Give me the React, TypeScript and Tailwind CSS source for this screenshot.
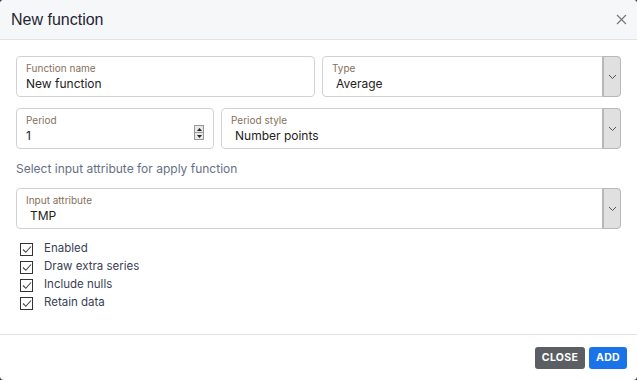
import React from 'react';

const FONT = { fontFamily: 'Inter, "Noto Sans", sans-serif' };

function Chevron() {
  return (
    <svg width="9" height="6" viewBox="0 0 9 6" fill="none" aria-hidden>
      <path d="M1 1l3.5 3.5L8 1" stroke="#555" strokeWidth="1" />
    </svg>
  );
}

function SelectBox({ label, value, className }: { label: string; value: string; className?: string }) {
  return (
    <div className={`flex h-[41px] min-w-0 rounded-[4px] border border-[#cfd3d8] bg-white ${className ?? ''}`}>
      <div className="flex min-w-0 flex-1 flex-col justify-center pl-[9px] pt-[1px]">
        <span className="text-[10px] leading-[13px] text-[#85705c]">{label}</span>
        <span className="pl-[4px] text-[12px] leading-[17px] text-[#222]">{value}</span>
      </div>
      <div className="flex w-[17px] shrink-0 items-center justify-center rounded-r-[3px] border-l border-[#b8b8b8] bg-[#e0e0e0] outline outline-1 outline-[#b8b8b8]">
        <Chevron />
      </div>
    </div>
  );
}

function Check({ label }: { label: string }) {
  return (
    <label className="flex h-[18px] items-center gap-[11px]">
      <span className="flex h-[13px] w-[13px] items-center justify-center border border-[#333] bg-white">
        <svg width="10" height="9" viewBox="0 0 10 9" fill="none" aria-hidden>
          <path d="M1 4.5l2.8 2.8L9 1.5" stroke="#444" strokeWidth="1.1" />
        </svg>
      </span>
      <span className="text-[11.5px] text-[#3a3f55]">{label}</span>
    </label>
  );
}

export default function App() {
  return (
    <div className="h-[380px] w-[637px] bg-[#3a3a3a]" style={FONT}>
      <div className="flex h-full flex-col overflow-hidden rounded-[4px] bg-white">
        <div className="flex h-[40px] items-center justify-between border-b border-[#dfe2e6] bg-[#f6f7f9] pl-[11px] pr-[10px]">
          <h2 className="text-[16px] text-[#1f2533]" style={{ fontFamily: '"Liberation Sans", Arial, sans-serif' }}>
            New function
          </h2>
          <svg width="11" height="11" viewBox="0 0 11 11" aria-hidden>
            <path d="M1 1l9 9M10 1l-9 9" stroke="#777" strokeWidth="1.2" />
          </svg>
        </div>

        <div className="flex flex-1 flex-col px-[16px] pt-[16px]">
          <div className="grid grid-cols-2 gap-[7px]">
            <div className="flex h-[41px] min-w-0 flex-col justify-center rounded-[4px] border border-[#cfd3d8] pl-[9px]">
              <span className="text-[10px] leading-[13px] text-[#85705c]">Function name</span>
              <span className="text-[12px] leading-[17px] text-[#222]">New function</span>
            </div>
            <SelectBox label="Type" value="Average" />
          </div>

          <div className="mt-[11px] flex gap-[7px]">
            <div className="flex h-[41px] w-[198px] items-center rounded-[4px] border border-[#cfd3d8] pl-[9px] pr-[9px]">
              <div className="flex flex-1 flex-col">
                <span className="text-[10px] leading-[13px] text-[#85705c]">Period</span>
                <span className="text-[12px] leading-[17px] text-[#222]">1</span>
              </div>
              <div className="mt-[8px] flex h-[15px] w-[10px] flex-col border border-[#999] bg-[#e8e8e8]">
                <div className="flex flex-1 items-center justify-center border-b border-[#999]">
                  <svg width="5" height="3" viewBox="0 0 5 3"><path d="M0 3L2.5 0L5 3z" fill="#222" /></svg>
                </div>
                <div className="flex flex-1 items-center justify-center">
                  <svg width="5" height="3" viewBox="0 0 5 3"><path d="M0 0L2.5 3L5 0z" fill="#222" /></svg>
                </div>
              </div>
            </div>
            <SelectBox className="flex-1" label="Period style" value="Number points" />
          </div>

          <p className="mt-[12px] text-[12px] leading-[16px] text-[#667085]">Select input attribute for apply function</p>

          <SelectBox className="mt-[11px]" label="Input attribute" value="TMP" />

          <div className="mt-[11px] flex flex-col pl-[4px]">
            <Check label="Enabled" />
            <Check label="Draw extra series" />
            <Check label="Include nulls" />
            <Check label="Retain data" />
          </div>
        </div>

        <div className="flex h-[46px] items-center justify-end gap-[4px] border-t border-[#dfe2e6] pr-[10px]">
          <button className="h-[22px] rounded-[3px] bg-[#5b5f64] px-[7px] text-[10.5px] font-bold tracking-[0.3px] text-white">
            CLOSE
          </button>
          <button className="h-[22px] rounded-[3px] bg-[#1a73e8] px-[7px] text-[10.5px] font-bold tracking-[0.3px] text-white">
            ADD
          </button>
        </div>
      </div>
    </div>
  );
}
